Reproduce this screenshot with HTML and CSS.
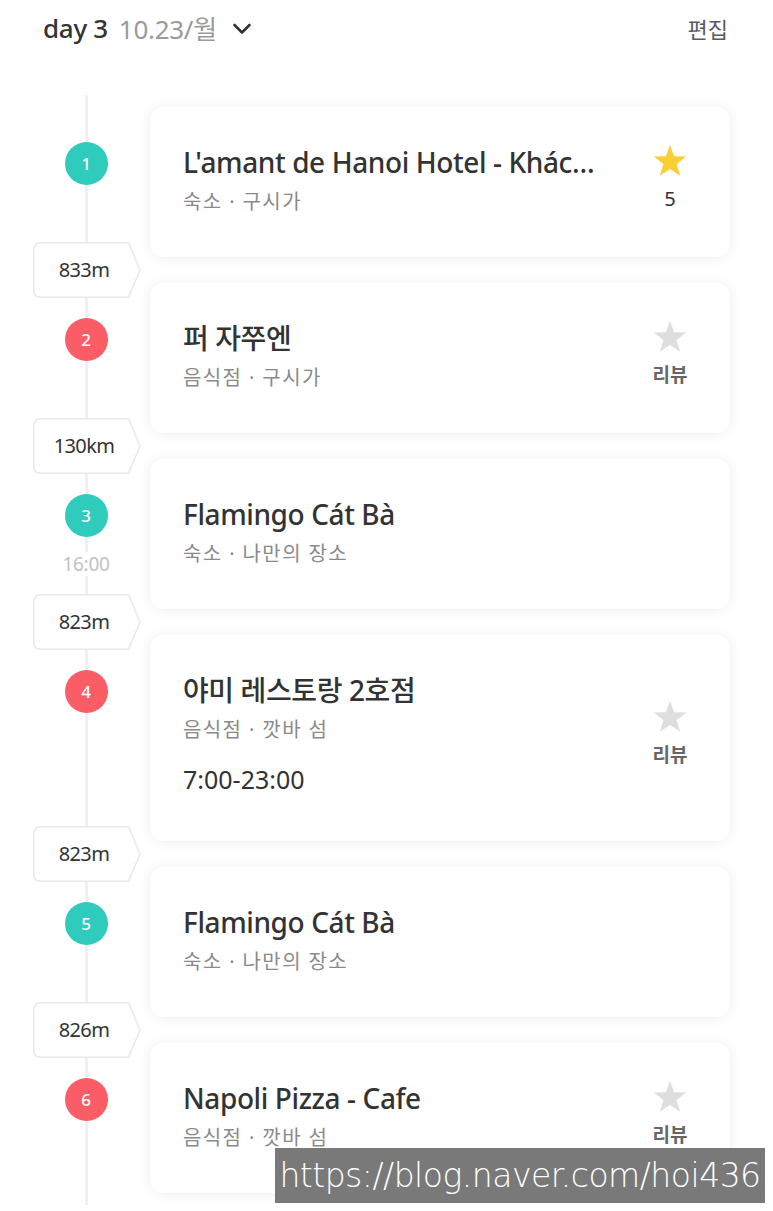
FILE: index.html
```html
<!DOCTYPE html>
<html lang="ko">
<head>
<meta charset="utf-8">
<title>day 3</title>
<link rel="stylesheet" href="styles.css">
</head>
<body>
<div class="page">
  <header class="header">
    <div class="day">
      <span class="day-num">day 3</span>
      <span class="day-date">10.23/월</span>
      <svg class="chev" width="20" height="14" viewBox="0 0 20 14"><path d="M2.5 3 L10 10.5 L17.5 3" fill="none" stroke="#333" stroke-width="2.6" stroke-linecap="round" stroke-linejoin="round"/></svg>
    </div>
    <div class="edit">편집</div>
  </header>

  <main class="list">
    <div class="item">
      <div class="rail"><div class="dot teal">1</div></div>
      <div class="card">
        <div class="info">
          <div class="title truncate">L'amant de Hanoi Hotel - Khách sạn L'amant de Hanoi</div>
          <div class="sub">숙소 · 구시가</div>
        </div>
        <div class="rate">
          <svg class="star" viewBox="0 0 24 24"><path class="gold" d="M12 1.8 L14.6 9 L22.3 9.2 L16.2 13.9 L18.4 21.3 L12 17 L5.6 21.3 L7.8 13.9 L1.7 9.2 L9.4 9 Z"/></svg>
          <div class="score">5</div>
        </div>
      </div>
    </div>

    <div class="gap"><div class="tag"><svg class="tag-bg" viewBox="0 0 108 56"><path d="M8 0.75 H95.5 L107 28 L95.5 55.25 H8 Q0.75 55.25 0.75 48 V8 Q0.75 0.75 8 0.75 Z"/></svg><span class="tag-text">833m</span></div></div>

    <div class="item">
      <div class="rail"><div class="dot red">2</div></div>
      <div class="card">
        <div class="info">
          <div class="title">퍼 자쭈엔</div>
          <div class="sub">음식점 · 구시가</div>
        </div>
        <div class="rate">
          <svg class="star" viewBox="0 0 24 24"><path class="grey" d="M12 1.8 L14.6 9 L22.3 9.2 L16.2 13.9 L18.4 21.3 L12 17 L5.6 21.3 L7.8 13.9 L1.7 9.2 L9.4 9 Z"/></svg>
          <div class="review">리뷰</div>
        </div>
      </div>
    </div>

    <div class="gap"><div class="tag"><svg class="tag-bg" viewBox="0 0 108 56"><path d="M8 0.75 H95.5 L107 28 L95.5 55.25 H8 Q0.75 55.25 0.75 48 V8 Q0.75 0.75 8 0.75 Z"/></svg><span class="tag-text">130km</span></div></div>

    <div class="item">
      <div class="rail"><div class="dot teal">3</div><div class="time">16:00</div></div>
      <div class="card">
        <div class="info">
          <div class="title">Flamingo Cát Bà</div>
          <div class="sub">숙소 · 나만의 장소</div>
        </div>
      </div>
    </div>

    <div class="gap"><div class="tag"><svg class="tag-bg" viewBox="0 0 108 56"><path d="M8 0.75 H95.5 L107 28 L95.5 55.25 H8 Q0.75 55.25 0.75 48 V8 Q0.75 0.75 8 0.75 Z"/></svg><span class="tag-text">823m</span></div></div>

    <div class="item">
      <div class="rail"><div class="dot red">4</div></div>
      <div class="card tall">
        <div class="info">
          <div class="title">야미 레스토랑 2호점</div>
          <div class="sub">음식점 · 깟바 섬</div>
          <div class="hours">7:00-23:00</div>
        </div>
        <div class="rate">
          <svg class="star" viewBox="0 0 24 24"><path class="grey" d="M12 1.8 L14.6 9 L22.3 9.2 L16.2 13.9 L18.4 21.3 L12 17 L5.6 21.3 L7.8 13.9 L1.7 9.2 L9.4 9 Z"/></svg>
          <div class="review">리뷰</div>
        </div>
      </div>
    </div>

    <div class="gap"><div class="tag"><svg class="tag-bg" viewBox="0 0 108 56"><path d="M8 0.75 H95.5 L107 28 L95.5 55.25 H8 Q0.75 55.25 0.75 48 V8 Q0.75 0.75 8 0.75 Z"/></svg><span class="tag-text">823m</span></div></div>

    <div class="item">
      <div class="rail"><div class="dot teal">5</div></div>
      <div class="card">
        <div class="info">
          <div class="title">Flamingo Cát Bà</div>
          <div class="sub">숙소 · 나만의 장소</div>
        </div>
      </div>
    </div>

    <div class="gap"><div class="tag"><svg class="tag-bg" viewBox="0 0 108 56"><path d="M8 0.75 H95.5 L107 28 L95.5 55.25 H8 Q0.75 55.25 0.75 48 V8 Q0.75 0.75 8 0.75 Z"/></svg><span class="tag-text">826m</span></div></div>

    <div class="item">
      <div class="rail"><div class="dot red">6</div></div>
      <div class="card">
        <div class="info">
          <div class="title">Napoli Pizza - Cafe</div>
          <div class="sub">음식점 · 깟바 섬</div>
        </div>
        <div class="rate">
          <svg class="star" viewBox="0 0 24 24"><path class="grey" d="M12 1.8 L14.6 9 L22.3 9.2 L16.2 13.9 L18.4 21.3 L12 17 L5.6 21.3 L7.8 13.9 L1.7 9.2 L9.4 9 Z"/></svg>
          <div class="review">리뷰</div>
        </div>
      </div>
    </div>
  </main>

  <div class="watermark">https://blog.naver.com/hoi436</div>
</div>
</body>
</html>
```

FILE: styles.css
```css
* { box-sizing: border-box; }

html, body {
  margin: 0;
  padding: 0;
  background: #ffffff;
}

body {
  font-family: "Noto Sans", "Noto Sans CJK KR", sans-serif;
  color: #333333;
  width: 773px;
  height: 1211px;
  overflow: hidden;
}

.page {
  position: relative;
  width: 773px;
  height: 1211px;
}

.header {
  height: 56px;
  margin-bottom: 39px;
  padding: 0 45px 0 43px;
  display: flex;
  align-items: center;
  justify-content: space-between;
}

.day {
  display: flex;
  align-items: center;
  gap: 11px;
  font-size: 26px;
  letter-spacing: -0.3px;
}

.day-num { color: #333333; font-weight: 500; }
.day-date { color: #9a9a9a; }
.chev { margin-left: 4px; margin-top: 2px; }

.edit {
  font-size: 22px;
  color: #5a5a5a;
}

.list {
  position: relative;
  padding-top: 12px;
  display: flex;
  flex-direction: column;
}

.list::before {
  content: "";
  position: absolute;
  left: 84.5px;
  top: 0;
  width: 3px;
  height: 1110px;
  background: #f0f0f0;
}

.item {
  display: flex;
}

.rail {
  width: 150px;
  padding-left: 22px;
  padding-top: 35px;
  display: flex;
  flex-direction: column;
  align-items: center;
  position: relative;
}

.dot {
  width: 43px;
  height: 43px;
  border-radius: 50%;
  color: #ffffff;
  font-size: 17px;
  font-weight: 500;
  display: flex;
  align-items: center;
  justify-content: center;
  position: relative;
}

.dot.teal { background: #2fcbbd; }
.dot.red { background: #fa5d66; }

.time {
  margin-top: 15px;
  font-size: 19px;
  color: #c2c2c2;
  background: #ffffff;
  line-height: 24px;
  letter-spacing: -0.3px;
  position: relative;
}

.card {
  width: 580px;
  height: 150px;
  background: #ffffff;
  border-radius: 13px;
  box-shadow: 0 1px 14px rgba(0, 0, 0, 0.07);
  padding: 38px 30px 0 33px;
  display: flex;
  align-items: center;
}

.card.tall { height: 206px; }

.info {
  flex: 1;
  min-width: 0;
  padding-right: 40px;
  align-self: flex-start;
  display: flex;
  flex-direction: column;
}

.title {
  height: 34px;
  font-size: 28px;
  line-height: 34px;
  font-weight: 500;
  color: #333333;
  letter-spacing: -0.4px;
  white-space: nowrap;
}

.truncate {
  overflow: hidden;
  text-overflow: ellipsis;
  height: 40px;
  margin-bottom: -6px;
}

.sub {
  height: 28px;
  margin-top: 9px;
  font-size: 20px;
  line-height: 28px;
  color: #8a8a8a;
  letter-spacing: 1.4px;
  white-space: nowrap;
}

.hours {
  height: 32px;
  margin-top: 19px;
  font-size: 25px;
  line-height: 32px;
  color: #333333;
}

.rate {
  width: 60px;
  flex-shrink: 0;
  display: flex;
  flex-direction: column;
  align-items: center;
  margin-bottom: 48px;
}

.star {
  width: 38px;
  height: 38px;
}

.gold { fill: #f8cf35; }
.grey { fill: #dedede; }

.score {
  margin-top: 6px;
  font-size: 20px;
  line-height: 26px;
  height: 26px;
  color: #333333;
}

.review {
  margin-top: 6px;
  font-size: 19px;
  line-height: 26px;
  height: 26px;
  font-weight: 700;
  color: #666666;
}

.gap {
  height: 26px;
  display: flex;
  align-items: center;
  position: relative;
  z-index: 2;
}

.tag {
  position: relative;
  margin-left: 33px;
  width: 108px;
  height: 56px;
  flex-shrink: 0;
  display: flex;
  align-items: center;
}

.tag-bg {
  position: absolute;
  left: 0;
  top: 0;
  width: 108px;
  height: 56px;
}

.tag-bg path {
  fill: #ffffff;
  stroke: #e9e9e9;
  stroke-width: 1.5;
}

.tag-text {
  position: relative;
  width: 96px;
  padding-left: 6px;
  text-align: center;
  font-size: 20px;
  line-height: 26px;
  color: #333333;
  letter-spacing: -0.6px;
}

.watermark {
  position: absolute;
  left: 275px;
  top: 1148px;
  width: 490px;
  height: 55px;
  background: rgba(110, 110, 110, 0.92);
  color: #ffffff;
  font-family: "DejaVu Sans", sans-serif;
  font-weight: 300;
  font-size: 33px;
  line-height: 55px;
  letter-spacing: -0.5px;
  text-align: center;
  white-space: nowrap;
}
```
